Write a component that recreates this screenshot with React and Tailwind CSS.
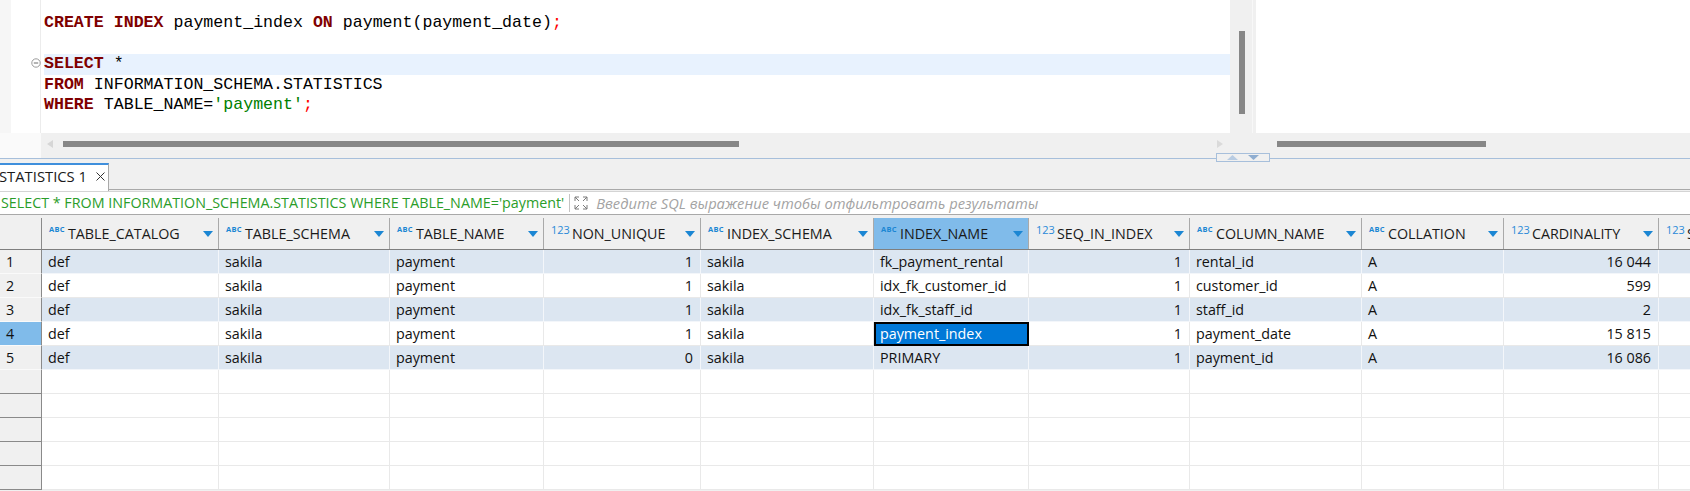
import React from "react";

const UI = "font-['Open_Sans','Noto_Sans',sans-serif]";
const MONO = "font-['Liberation_Mono','Courier_New',monospace]";

const columns = [
  { name: "TABLE_CATALOG", kind: "abc", w: "w-[177px]" },
  { name: "TABLE_SCHEMA", kind: "abc", w: "w-[171px]" },
  { name: "TABLE_NAME", kind: "abc", w: "w-[154px]" },
  { name: "NON_UNIQUE", kind: "num", w: "w-[157px]" },
  { name: "INDEX_SCHEMA", kind: "abc", w: "w-[173px]" },
  { name: "INDEX_NAME", kind: "abc", w: "w-[155px]", active: true },
  { name: "SEQ_IN_INDEX", kind: "num", w: "w-[161px]" },
  { name: "COLUMN_NAME", kind: "abc", w: "w-[172px]" },
  { name: "COLLATION", kind: "abc", w: "w-[142px]" },
  { name: "CARDINALITY", kind: "num", w: "w-[155px]" },
  { name: "SUB_PART", kind: "num", w: "w-[140px]" },
];

const rows = [
  ["def", "sakila", "payment", "1", "sakila", "fk_payment_rental", "1", "rental_id", "A", "16 044", ""],
  ["def", "sakila", "payment", "1", "sakila", "idx_fk_customer_id", "1", "customer_id", "A", "599", ""],
  ["def", "sakila", "payment", "1", "sakila", "idx_fk_staff_id", "1", "staff_id", "A", "2", ""],
  ["def", "sakila", "payment", "1", "sakila", "payment_index", "1", "payment_date", "A", "15 815", ""],
  ["def", "sakila", "payment", "0", "sakila", "PRIMARY", "1", "payment_id", "A", "16 086", ""],
];

const SELECTED_ROW = 3;
const SELECTED_COL = 5;

function Kw({ children }) {
  return <span className="font-bold text-[#7f0000]">{children}</span>;
}

function Editor() {
  return (
    <div className="flex h-[133px] bg-white">
      <div className="w-[11px] shrink-0 bg-[#f6f6f6]" />
      <div className="relative w-[30px] shrink-0 border-r border-[#ececec]">
        <svg className="absolute left-[20px] top-[58px]" width="10" height="10" viewBox="0 0 10 10">
          <circle cx="5" cy="5" r="4.2" fill="white" stroke="#9a9a9a" strokeWidth="1" />
          <line x1="2.8" y1="5" x2="7.2" y2="5" stroke="#6a6a6a" strokeWidth="1" />
        </svg>
      </div>
      <div className="w-[3px] shrink-0" />
      <div className={`${MONO} flex-1 pt-[13px] text-[16.6px] leading-[20.5px] text-black whitespace-pre`}>
        <div>
          <Kw>CREATE</Kw> <Kw>INDEX</Kw> payment_index <Kw>ON</Kw> payment(payment_date)<span className="text-[#ff0000]">;</span>
        </div>
        <div> </div>
        <div className="bg-[#e8f2fe]">
          <Kw>SELECT</Kw> *
        </div>
        <div>
          <Kw>FROM</Kw> INFORMATION_SCHEMA.STATISTICS
        </div>
        <div>
          <Kw>WHERE</Kw> TABLE_NAME=<span className="text-[#008000]">'payment'</span><span className="text-[#ff0000]">;</span>
        </div>
      </div>
    </div>
  );
}

function EditorHScroll() {
  return (
    <div className="flex h-[25px]">
      <div className="w-[41px] shrink-0 bg-[#fafafa]" />
      <div className="flex flex-1 items-start bg-[#f0f0f0] pt-[8px]">
        <svg className="ml-[6px] mt-[-1px] shrink-0" width="7" height="8" viewBox="0 0 7 8">
          <polygon points="6,0 6,8 0,4" fill="#d6d6d6" />
        </svg>
        <div className="ml-[9px] h-[6px] w-[676px] bg-[#878787]" />
        <div className="flex-1" />
        <svg className="mr-[6px] mt-[-1px] shrink-0" width="7" height="8" viewBox="0 0 7 8">
          <polygon points="0,0 0,8 6,4" fill="#dadada" />
        </svg>
      </div>
    </div>
  );
}

function EditorVScroll() {
  return (
    <div className="flex w-[26px] shrink-0 bg-[#f0f0f0]">
      <div className="w-[22px] pt-[31px] pl-[9px]">
        <div className="h-[83px] w-[6px] bg-[#878787]" />
      </div>
      <div className="w-px bg-[#f8f8f8]" />
    </div>
  );
}

function RightPane() {
  return (
    <div className="flex flex-1 flex-col">
      <div className="h-[133px] bg-white" />
      <div className="h-[25px] bg-[#f0f0f0] pt-[8px] pl-[21px]">
        <div className="h-[6px] w-[209px] bg-[#878787]" />
      </div>
    </div>
  );
}

function Sash() {
  return (
    <div className="relative h-px bg-[#a7bfdb]">
      <div className="absolute left-[1216px] top-[-5px] flex h-[9px] w-[54px] items-center justify-center gap-[10px] border border-[#a7bfdb] bg-[#f0f0f0]">
        <svg width="11" height="5" viewBox="0 0 11 5">
          <polygon points="0,5 11,5 5.5,0" fill="#b9cce2" />
        </svg>
        <svg width="11" height="5" viewBox="0 0 11 5">
          <polygon points="0,0 11,0 5.5,5" fill="#8fadd0" />
        </svg>
      </div>
    </div>
  );
}

function TabBar() {
  return (
    <div className="flex h-[31px] items-end border-b border-[#a9a9a9] bg-[#f0f0f0]">
      <div className={`${UI} mb-[-2px] flex h-[28px] w-[109px] items-center border-t-2 border-r border-t-[#3f8fdc] border-r-[#a9a9a9] bg-white pb-[4px] text-[14.8px] text-[#1a1a1a]`}>
        <span className="ml-[-1px] whitespace-nowrap">STATISTICS 1</span>
        <svg className="ml-[9px]" width="9" height="9" viewBox="0 0 9 9">
          <line x1="0.5" y1="0.5" x2="8.5" y2="8.5" stroke="#333" strokeWidth="1" />
          <line x1="8.5" y1="0.5" x2="0.5" y2="8.5" stroke="#333" strokeWidth="1" />
        </svg>
      </div>
    </div>
  );
}

function FilterRow() {
  return (
    <div className="pt-px bg-[#f0f0f0]">
      <div className={`${UI} flex h-[24px] items-center border-t border-b border-t-[#d4d4d4] border-b-[#a9a9a9] bg-white text-[14.3px]`}>
        <span className="pl-[1px] text-[#2a9d2a] whitespace-nowrap">SELECT * FROM INFORMATION_SCHEMA.STATISTICS WHERE TABLE_NAME='payment'</span>
        <div className="ml-[5px] h-[18px] w-px bg-[#c4c4c4]" />
        <svg className="ml-[4px]" width="14" height="14" viewBox="0 0 14 14" fill="none" stroke="#7a7a7a" strokeWidth="1">
          <path d="M1 5V1h4M1 1l4 4" />
          <path d="M13 5V1H9M13 1L9 5" />
          <path d="M1 9v4h4M1 13l4-4" />
          <path d="M13 9v4H9M13 13L9 9" />
        </svg>
        <span className="ml-[8px] text-[14.7px] italic text-[#a3a3a3] whitespace-nowrap">Введите SQL выражение чтобы отфильтровать результаты</span>
      </div>
    </div>
  );
}

function TypeIcon({ kind }) {
  if (kind === "abc") {
    return (
      <span className="relative top-[-4px] mr-[3px] text-[7.5px] font-bold leading-none tracking-[0.3px] text-[#1b86d3]">ABC</span>
    );
  }
  return <span className="relative top-[-4px] mr-[2px] text-[11px] leading-none text-[#2a8ad8]">123</span>;
}

function Header() {
  return (
    <div className={`${UI} flex h-[35px] border-b border-[#7f7f7f] bg-[#f0f0f0] text-[14.3px] text-[#1a1a1a]`}>
      <div className="mt-[3px] w-[42px] shrink-0 border-r border-[#8a8a8a]" />
      {columns.map((c) => (
        <div
          key={c.name}
          className={`${c.w} mt-[3px] flex shrink-0 items-center border-r border-[#a9a9a9] pl-[7px] pr-[5px] ${c.active ? "bg-[#80bbea]" : ""}`}
        >
          <TypeIcon kind={c.kind} />
          <span className="whitespace-nowrap">{c.name}</span>
          <svg className="ml-auto shrink-0" width="10" height="6" viewBox="0 0 10 6">
            <polygon points="0,0 10,0 5,6" fill="#1b86d3" />
          </svg>
        </div>
      ))}
    </div>
  );
}

function DataRow({ index, values }) {
  const selected = index === SELECTED_ROW;
  const empty = !values;
  const bg = empty || index % 2 === 1 ? "bg-white" : selected ? "bg-[#bedcf4]" : "bg-[#dce6f1]";
  const line = empty || index % 2 === 1 ? "border-[#e9e9e9]" : "border-[#f3f6fa]";
  return (
    <div className={`${UI} flex h-[24px] text-[14.3px] text-[#111]`}>
      <div
        className={`flex w-[42px] shrink-0 items-center border-r border-r-[#8a8a8a] border-b pl-[6px] ${
          selected ? "bg-[#80bbea]" : "bg-[#f0f0f0]"
        } ${empty ? "border-b-[#8a8a8a]" : "border-b-[#fafafa]"}`}
      >
        {empty ? "" : index + 1}
      </div>
      {columns.map((c, ci) => {
        const isSel = selected && ci === SELECTED_COL;
        const v = empty ? "" : values[ci];
        const align = c.kind === "num" ? "justify-end pr-[7px]" : isSel ? "pl-[4px]" : "pl-[6px]";
        const look = isSel ? "border-2 border-black bg-[#0078d7] text-white" : `border-r border-b ${line} ${bg}`;
        return (
          <div key={c.name} className={`${c.w} flex shrink-0 items-center whitespace-nowrap ${align} ${look}`}>
            {v}
          </div>
        );
      })}
    </div>
  );
}

export default function App() {
  return (
    <div className="h-[491px] w-[1690px] overflow-hidden bg-[#f0f0f0]">
      <div className="flex">
        <div className="flex w-[1230px] shrink-0 flex-col">
          <Editor />
          <EditorHScroll />
        </div>
        <div className="flex flex-col">
          <div className="flex h-[133px]">
            <EditorVScroll />
          </div>
          <div className="h-[25px] w-[26px] bg-[#f0f0f0]" />
        </div>
        <RightPane />
      </div>
      <Sash />
      <TabBar />
      <FilterRow />
      <Header />
      <div>
        {rows.map((r, i) => (
          <DataRow key={i} index={i} values={r} />
        ))}
        {Array.from({ length: 5 }).map((_, i) => (
          <DataRow key={`e${i}`} index={5 + i} values={null} />
        ))}
      </div>
    </div>
  );
}
